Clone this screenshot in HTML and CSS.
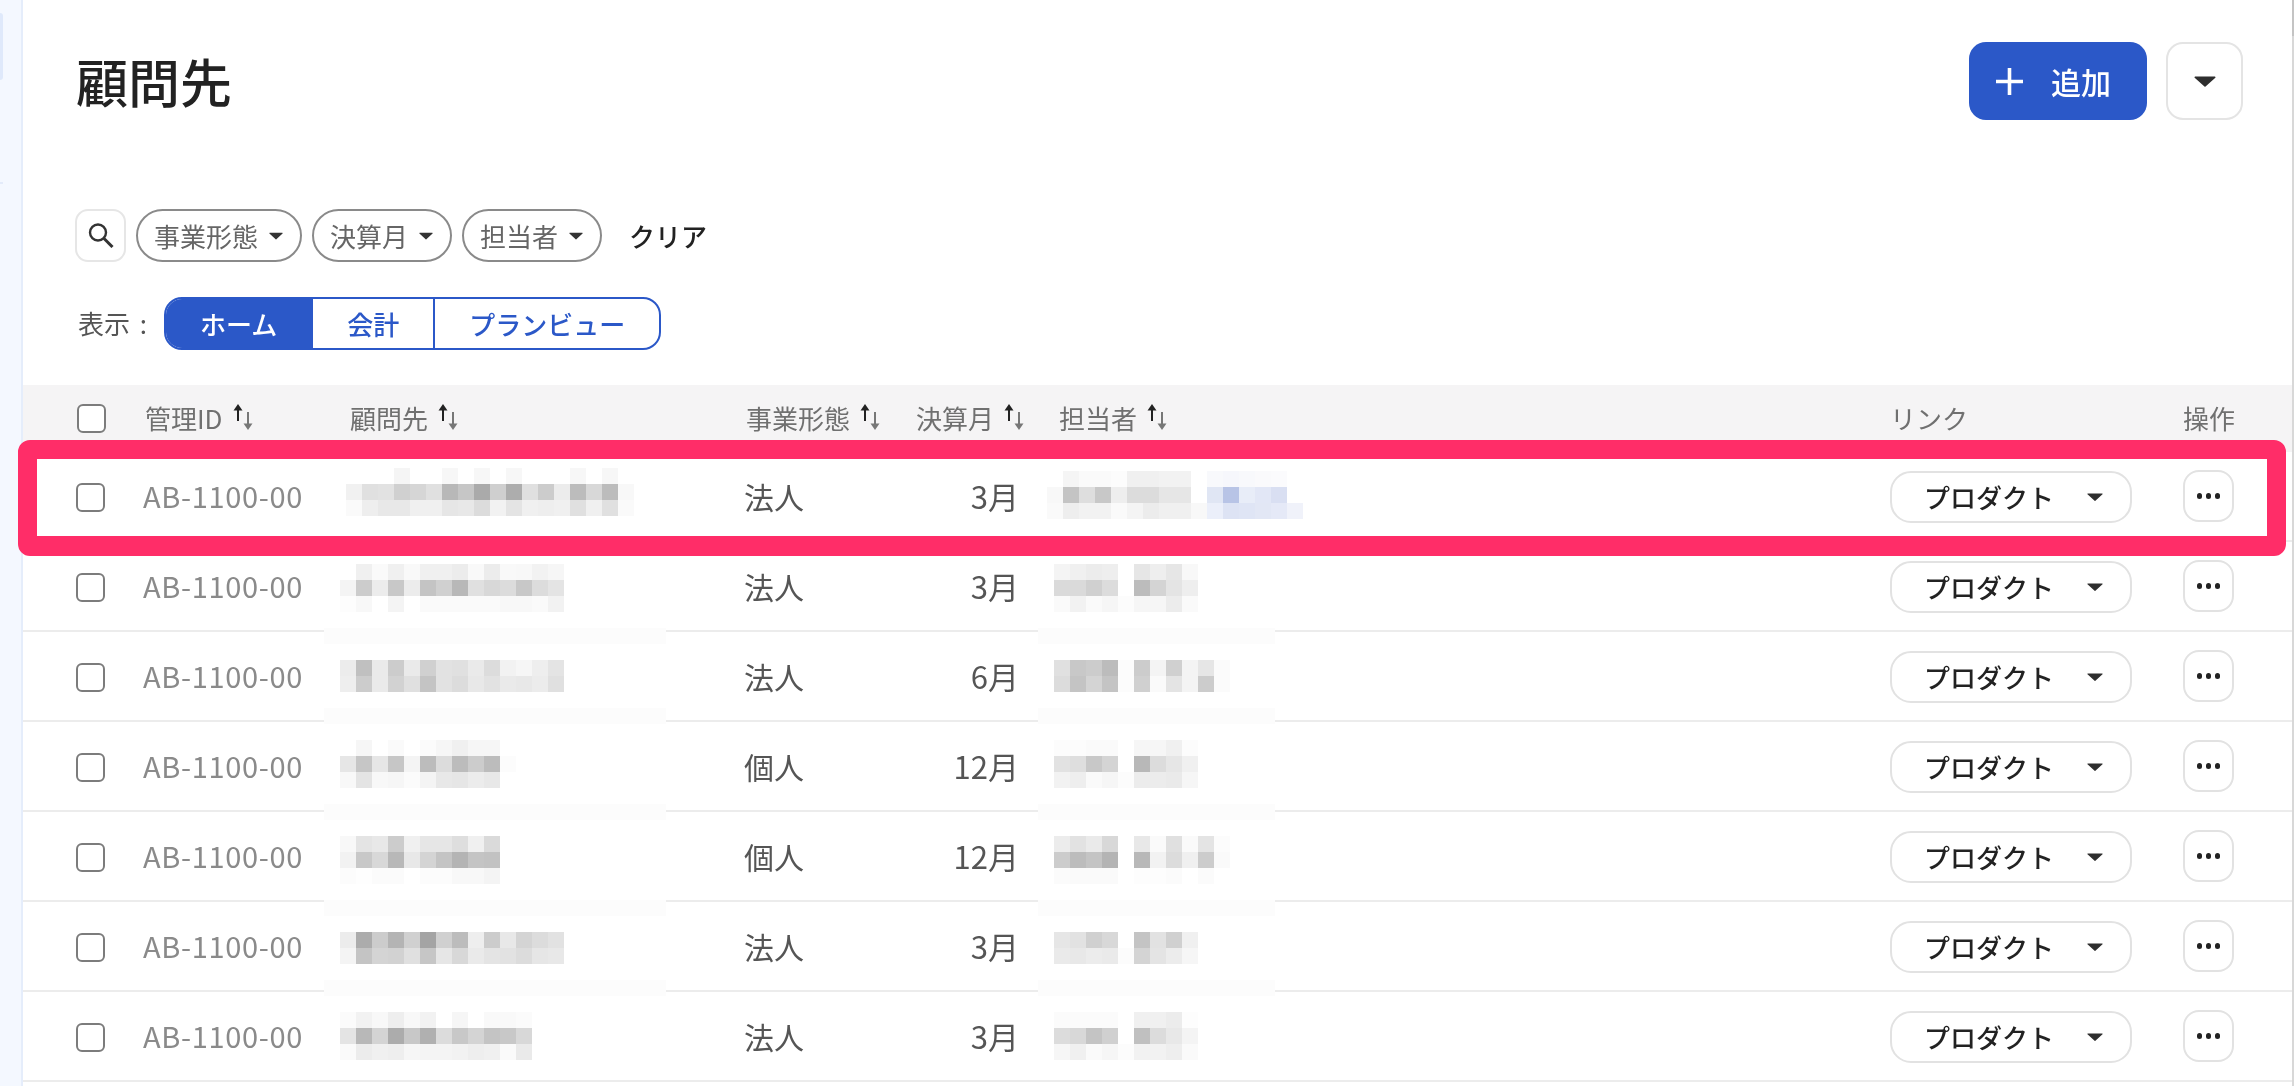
FILE: index.html
```html
<!DOCTYPE html>
<html lang="ja">
<head>
<meta charset="utf-8">
<title>顧問先</title>
<link rel="stylesheet" href="styles.css">
</head>
<body>
<svg class="defs" width="0" height="0" aria-hidden="true">
  <symbol id="sort" viewBox="0 0 20 26">
    <path d="M5 5v12" stroke="#222" stroke-width="2" fill="none"/>
    <path d="M5 0l4.5 6.5h-9z" fill="#222"/>
    <path d="M15 8v14" stroke="#777" stroke-width="2" fill="none"/>
    <path d="M15 26l-4.5-6.5h9z" fill="#777"/>
  </symbol>
  <symbol id="caret" viewBox="0 0 20 10">
    <path d="M1 .5h18a.6.6 0 0 1 .4 1L10.5 9.6a.7.7 0 0 1-1 0L.6 1.5A.6.6 0 0 1 1 .5z" fill="currentColor"/>
  </symbol>
</svg>
<div class="app">
  <aside class="sidebar"><span class="side-active"></span><span class="side-tick"></span></aside>
  <main class="main">
    <header class="head">
      <h1 class="title">顧問先</h1>
      <div class="actions">
        <button class="btn-add">
          <svg class="plus" viewBox="0 0 29 29"><path d="M14.5 1v27M1 14.5h27" stroke="#fff" stroke-width="3.6" fill="none"/></svg>
          <span>追加</span>
        </button>
        <button class="btn-more"><svg class="caret-lg"><use href="#caret"/></svg></button>
      </div>
    </header>

    <div class="filters">
      <button class="btn-search">
        <svg class="search" viewBox="0 0 26 25"><circle cx="10" cy="9.5" r="8" stroke="#333" stroke-width="2.4" fill="none"/><path d="M16 15.5l8.5 8.5" stroke="#333" stroke-width="3" fill="none"/></svg>
      </button>
      <button class="pill">事業形態<svg class="caret-sm"><use href="#caret"/></svg></button>
      <button class="pill">決算月<svg class="caret-sm"><use href="#caret"/></svg></button>
      <button class="pill">担当者<svg class="caret-sm"><use href="#caret"/></svg></button>
      <button class="clear">クリア</button>
    </div>

    <div class="views">
      <span class="views-label">表示 :</span>
      <div class="seg">
        <button class="seg-item active">ホーム</button>
        <button class="seg-item">会計</button>
        <button class="seg-item">プランビュー</button>
      </div>
    </div>

    <section class="table">
      <div class="thead">
        <span class="check"></span>
        <span class="th">管理ID<svg class="sort"><use href="#sort"/></svg></span>
        <span class="th">顧問先<svg class="sort"><use href="#sort"/></svg></span>
        <span class="th">事業形態<svg class="sort"><use href="#sort"/></svg></span>
        <span class="th">決算月<svg class="sort"><use href="#sort"/></svg></span>
        <span class="th">担当者<svg class="sort"><use href="#sort"/></svg></span>
        <span class="th">リンク</span>
        <span class="th">操作</span>
      </div>

      <div class="row">
        <span class="check"></span><span class="id">AB-1100-00</span>
        <svg class="mosaic" data-x="6" data-y="16" data-cells="ff ff ff f5 ff ff f7 ff f7 ff f7 ff ff ff f7 ff f7 ff|f1 e0 e2 d0 d6 e0 b8 c6 aa cf ad e0 cc ec bc d8 bc f8|fa ee e8 e8 f0 f0 e6 e8 dc f2 e4 f0 ee f0 e0 f0 e0 fa"></svg>
        <span class="kind">法人</span><span class="month">3月</span>
        <svg class="mosaic" data-x="-7" data-y="19" data-tint="10" data-cells="ff f5 fa fa fc f0 f0 f2 f2 ff f8f9fc f6f7fc f8f9fc fafafc fbfbfd ff|f8 c4 de c8 ee dc dc e6 e6 ff e0e6f4 b8c4e6 e8edf8 e2e7f6 d9dff2 ff|fa ee f2 f2 fa f4 ec f0 f0 f8 ebeffa dde3f4 dfe5f5 e2e7f5 e5e9f7 f0f2fa"></svg>
        <button class="btn-link">プロダクト<svg class="caret-xs"><use href="#caret"/></svg></button>
        <button class="btn-dots"><i></i><i></i><i></i></button>
      </div>

      <div class="row">
        <span class="check"></span><span class="id">AB-1100-00</span>
        <svg class="mosaic" data-x="0" data-y="22" data-cells="ff f0 fa f0 f9 f0 f0 ec f9 ec f9 f8 f2 f6|f4 cc ec c8 ec c4 d0 b8 e0 d8 dc c8 dc e4|fd f8 ff f4 ff fa fa fa fa fa f8 f8 fa f2"></svg>
        <span class="kind">法人</span><span class="month">3月</span>
        <svg class="mosaic" data-x="0" data-y="22" data-cells="f4 f0 ec ee ff e6 ee e6 f8|da da d0 dc ff bc d4 e4 ee|fa f2 fa f6 fc f6 f6 ec fa"></svg>
        <button class="btn-link">プロダクト<svg class="caret-xs"><use href="#caret"/></svg></button>
        <button class="btn-dots"><i></i><i></i><i></i></button>
      </div>

      <div class="row">
        <span class="check"></span><span class="id">AB-1100-00</span>
        <svg class="mosaic" data-x="0" data-y="28" data-patch="-4" data-patch-w="342" data-cells="ec c0 ea cc ea d0 e2 e0 ea dc f2 f6 ee e4|ee cc ea d2 e0 c4 e2 dc e8 e2 ea e8 ec e0"></svg>
        <span class="kind">法人</span><span class="month">6月</span>
        <svg class="mosaic" data-x="0" data-y="28" data-patch="-4" data-patch-w="237" data-cells="e0 c8 cc bc fc cc f4 d0 f4 e6 fb|dc c4 d4 c4 fc d0 fa e4 f4 cc fb"></svg>
        <button class="btn-link">プロダクト<svg class="caret-xs"><use href="#caret"/></svg></button>
        <button class="btn-dots"><i></i><i></i><i></i></button>
      </div>

      <div class="row">
        <span class="check"></span><span class="id">AB-1100-00</span>
        <svg class="mosaic" data-x="0" data-y="18" data-patch="-14" data-patch-w="342" data-cells="ff f6 ff fa ff fb f6 f0 f6 f6 ff|e6 c6 e6 c6 f4 bc dc bc cc bc fc|f8 e4 f8 f6 fb f4 e8 e6 ec e8 ff"></svg>
        <span class="kind">個人</span><span class="month">12月</span>
        <svg class="mosaic" data-x="0" data-y="18" data-patch="-14" data-patch-w="237" data-cells="fc fc fa fa ff f6 f6 f0 fc|e2 de c8 d4 ff b8 dc e6 f0|f2 ee fa f6 fc ec ec ea f6"></svg>
        <button class="btn-link">プロダクト<svg class="caret-xs"><use href="#caret"/></svg></button>
        <button class="btn-dots"><i></i><i></i><i></i></button>
      </div>

      <div class="row">
        <span class="check"></span><span class="id">AB-1100-00</span>
        <svg class="mosaic" data-x="0" data-y="24" data-patch="-8" data-patch-w="342" data-cells="f8 e4 e8 cc f0 e6 e6 de f0 da|f2 c8 d8 b8 e8 d4 c4 b4 c4 c2|fc fe fb fb ff fc fc f8 f8 f4"></svg>
        <span class="kind">個人</span><span class="month">12月</span>
        <svg class="mosaic" data-x="0" data-y="24" data-patch="-8" data-patch-w="237" data-cells="ec e2 ea d8 ff e8 fa e0 fa e4 fc|cc bc c4 b4 ff b8 f2 dc f0 cc fa|fb fa fa fa ff fd fd fb ff fb ff"></svg>
        <button class="btn-link">プロダクト<svg class="caret-xs"><use href="#caret"/></svg></button>
        <button class="btn-dots"><i></i><i></i><i></i></button>
      </div>

      <div class="row">
        <span class="check"></span><span class="id">AB-1100-00</span>
        <svg class="mosaic" data-x="0" data-y="30" data-patch="-2" data-patch-w="342" data-cells="ec ac cc b4 d0 a4 d0 bc ee cc e8 d4 dc e2|f4 c4 d4 d2 e0 c6 e6 d8 ea e4 e2 dc e6 e8"></svg>
        <span class="kind">法人</span><span class="month">3月</span>
        <svg class="mosaic" data-x="0" data-y="30" data-patch="-2" data-patch-w="237" data-cells="e6 e2 d0 d8 ff c4 e2 d0 f0|ea e8 ec ea fc d4 e4 ec f6"></svg>
        <button class="btn-link">プロダクト<svg class="caret-xs"><use href="#caret"/></svg></button>
        <button class="btn-dots"><i></i><i></i><i></i></button>
      </div>

      <div class="row">
        <span class="check"></span><span class="id">AB-1100-00</span>
        <svg class="mosaic" data-x="0" data-y="20" data-patch="-12" data-patch-w="342" data-cells="fb f2 f8 ee f8 f2 ff f6 ff f9 f9 fb|e4 b8 d4 ac c8 b0 dc c8 d4 c4 c8 d8|fa ec f0 ee f6 f4 f4 f2 ee f0 fa ea"></svg>
        <span class="kind">法人</span><span class="month">3月</span>
        <svg class="mosaic" data-x="0" data-y="20" data-patch="-12" data-patch-w="237" data-cells="fb fb fb fb ff f0 f0 ec fd|dc d8 c4 d0 ff c0 dc e8 f4|f6 f0 fa f6 fc f2 f2 ee fa"></svg>
        <button class="btn-link">プロダクト<svg class="caret-xs"><use href="#caret"/></svg></button>
        <button class="btn-dots"><i></i><i></i><i></i></button>
      </div>

      <div class="highlight"></div>
    </section>
  </main>
  <div class="edge"></div>
</div>
<script src="script.js"></script>
</body>
</html>
```

FILE: styles.css
```css
* { box-sizing: border-box; }
html, body { margin: 0; height: 100%; overflow: hidden; background: #fff; }
body {
  font-family: "Noto Sans CJK JP", "Noto Sans", sans-serif;
  color: #333;
}
button { font: inherit; background: none; border: 0; padding: 0; margin: 0; color: inherit; }
.defs { position: absolute; }

.app { display: flex; height: 100vh; }
.sidebar {
  width: 23px;
  flex: none;
  background: #f4f8ff;
  border-right: 2px solid #e5edfb;
  display: flex;
  flex-direction: column;
  align-items: flex-start;
}
.side-active { width: 3px; height: 67px; margin-top: 13px; background: #dfe9fb; border-radius: 0 3px 3px 0; }
.side-tick { width: 3px; height: 2px; margin-top: 102px; background: #e3ebfa; }

.main { flex: 1; min-width: 0; position: relative; }
.edge { width: 2px; flex: none; background: linear-gradient(#c4c4c4 36px, #d8d8d8 36px); }

/* the reference is a slightly soft capture */
.head, .filters, .views, .thead, .row > .check, .id, .kind, .month, .btn-link, .btn-dots { filter: blur(.5px); }

.head {
  display: flex;
  align-items: center;
  justify-content: space-between;
  padding: 42px 49px 0 53px;
}
.title { margin: 0; font-size: 52px; font-weight: 500; line-height: 78px; color: #222; }
.actions { display: flex; gap: 19px; }
.btn-add {
  width: 178px;
  height: 78px;
  background: #2b58c8;
  border-radius: 17px;
  color: #fff;
  font-size: 30px;
  font-weight: 500;
  display: flex;
  align-items: center;
  padding-left: 26px;
  gap: 27px;
}
.plus { width: 29px; height: 29px; }
.btn-more {
  width: 77px;
  height: 78px;
  border: 2px solid #e4e4e4;
  border-radius: 17px;
  display: flex;
  align-items: center;
  justify-content: center;
  color: #2e2e2e;
}
.caret-lg { width: 22px; height: 11px; }

.filters {
  display: flex;
  align-items: center;
  height: 53px;
  margin-top: 89px;
  padding-left: 52px;
  font-size: 26px;
}
.btn-search {
  width: 51px;
  height: 53px;
  border: 2px solid #e6e6e6;
  border-radius: 13px;
  display: flex;
  align-items: center;
  justify-content: center;
  margin-right: 10px;
}
.search { width: 26px; height: 25px; }
.pill {
  height: 53px;
  border: 2px solid #8a8a8a;
  border-radius: 27px;
  padding: 0 17px 0 16px;
  display: flex;
  align-items: center;
  gap: 11px;
  color: #666;
  margin-right: 10px;
  line-height: 1;
}
.caret-sm { width: 14px; height: 8px; color: #333; }
.clear { margin-left: 17px; font-weight: 500; color: #222; }

.views {
  display: flex;
  align-items: center;
  height: 53px;
  margin-top: 35px;
  padding-left: 55px;
  font-size: 26px;
  gap: 17px;
}
.views-label { color: #555; word-spacing: 4px; margin-bottom: 2px; }
.seg {
  display: flex;
  height: 53px;
  border: 2px solid #2b58c8;
  border-radius: 18px;
  overflow: hidden;
  color: #2b58c8;
  font-weight: 500;
}
.seg-item { padding: 0 34px; line-height: 1; }
.seg-item + .seg-item { border-left: 2px solid #2b58c8; }
.seg-item.active { background: #2b58c8; color: #fff; }

.table { margin-top: 35px; position: relative; }
.check {
  display: block;
  width: 29px;
  height: 29px;
  border: 2.5px solid #7c7c7c;
  border-radius: 6px;
  background: #fff;
}
.thead {
  display: grid;
  grid-template-columns: 68px 205px 396px 170px 143px 831px 293px 51px;
  align-items: center;
  height: 67px;
  padding: 0 0 0 54px;
  background: #f5f4f5;
}
.th {
  display: flex;
  align-items: center;
  font-size: 26px;
  line-height: 1;
  color: #707070;
  white-space: nowrap;
  margin-bottom: 2px;
}
.sort { width: 20px; height: 26px; margin-left: 10px; margin-top: -2px; }

.row {
  display: grid;
  grid-template-columns: 67px 197px 404px 151px 124px 35px 836px 293px 51px;
  align-items: center;
  height: 90px;
  padding-left: 53px;
  box-shadow: inset 0 -2px 0 #ececec;
}
.row > .mosaic:nth-of-type(2) { grid-column: 7; }
.id { font-size: 29px; letter-spacing: .65px; color: #8a8a8a; line-height: 1; margin-bottom: 3px; white-space: nowrap; }
.kind { font-size: 30px; color: #555; line-height: 1; margin-bottom: 3px; }
.month { font-size: 31px; color: #555; line-height: 1; text-align: right; margin-bottom: 3px; }
.mosaic { display: block; width: 100%; height: 90px; overflow: visible; shape-rendering: crispEdges; align-self: start; }

.btn-link {
  width: 242px;
  height: 52px;
  border: 2px solid #e2e2e2;
  border-radius: 21px;
  font-size: 26px;
  font-weight: 500;
  color: #222;
  display: flex;
  align-items: center;
  padding-left: 32px;
  line-height: 1;
}
.caret-xs { width: 16px; height: 8px; margin-left: 33px; color: #2e2e2e; }
.btn-dots {
  width: 51px;
  height: 52px;
  border: 2px solid #e2e2e2;
  border-radius: 16px;
  display: flex;
  align-items: center;
  justify-content: center;
  gap: 3.5px;
  margin-top: -2px;
}
.btn-dots i { width: 5.5px; height: 5.5px; border-radius: 50%; background: #222; }

.highlight {
  position: absolute;
  left: -5px;
  top: 55px;
  width: 2268px;
  height: 116px;
  border: 19px solid #ff2d68;
  border-bottom-width: 20px;
  border-radius: 12px;
  pointer-events: none;
}
```

FILE: script.js
```js
// Draws the pixelated (redacted) name cells from their grey levels.
var NS = 'http://www.w3.org/2000/svg';
function rect(svg, x, y, w, h, fill) {
  var r = document.createElementNS(NS, 'rect');
  r.setAttribute('x', x);
  r.setAttribute('y', y);
  r.setAttribute('width', w);
  r.setAttribute('height', h);
  r.setAttribute('fill', fill);
  svg.appendChild(r);
}
document.querySelectorAll('.mosaic').forEach(function (svg) {
  var ox = +svg.dataset.x, oy = +svg.dataset.y;
  if (svg.dataset.patch) {
    rect(svg, -16, +svg.dataset.patch, +svg.dataset.patchW, 16, '#fcfcfc');
  }
  svg.dataset.cells.split('|').forEach(function (line, j) {
    line.split(' ').forEach(function (c, i) {
      if (c === 'ff') return;
      var fill = c.length === 6 ? '#' + c : '#' + c + c + c;
      rect(svg, ox + i * 16, oy + j * 16, 16, 16, fill);
    });
  });
});
```
